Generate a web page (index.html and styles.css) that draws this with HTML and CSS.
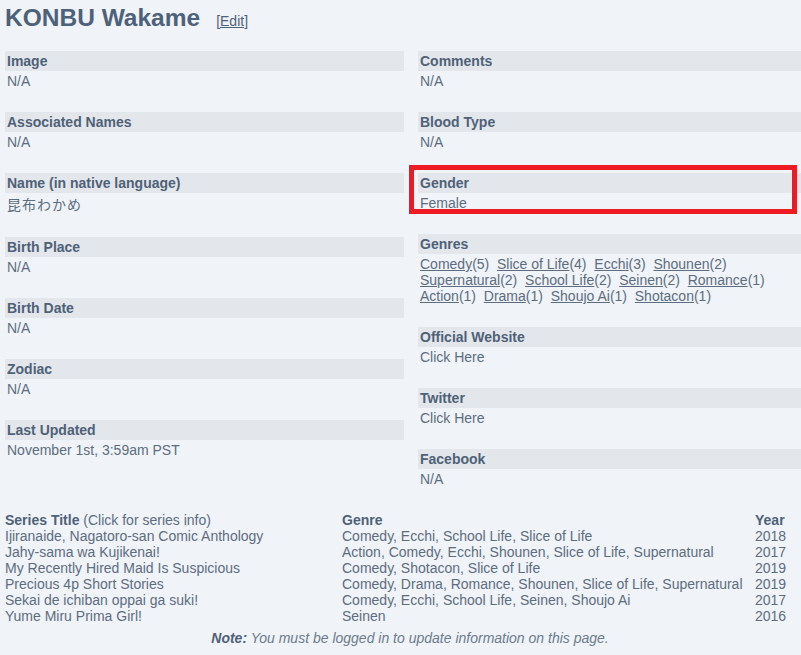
FILE: index.html
```html
<!DOCTYPE html>
<html>
<head>
<meta charset="utf-8">
<link rel="stylesheet" href="styles.css">
</head>
<body>
<div class="page">
  <div class="titlebar">
    <h1 class="title">KONBU Wakame</h1>
    <a class="edit" href="#">[Edit]</a>
  </div>
  <div class="cols">
    <div class="col">
      <div class="item"><div class="head">Image</div><div class="val">N/A</div></div>
      <div class="item"><div class="head">Associated Names</div><div class="val">N/A</div></div>
      <div class="item"><div class="head">Name (in native language)</div><div class="val cjk">昆布わかめ</div></div>
      <div class="item"><div class="head">Birth Place</div><div class="val">N/A</div></div>
      <div class="item"><div class="head">Birth Date</div><div class="val">N/A</div></div>
      <div class="item"><div class="head">Zodiac</div><div class="val">N/A</div></div>
      <div class="item"><div class="head">Last Updated</div><div class="val">November 1st, 3:59am PST</div></div>
    </div>
    <div class="col">
      <div class="item"><div class="head">Comments</div><div class="val">N/A</div></div>
      <div class="item"><div class="head">Blood Type</div><div class="val">N/A</div></div>
      <div class="item hl"><div class="head">Gender</div><div class="val">Female</div><div class="mark"></div></div>
      <div class="item"><div class="head">Genres</div><div class="val"><a href="#">Comedy</a>(5)&nbsp; <a href="#">Slice of Life</a>(4)&nbsp; <a href="#">Ecchi</a>(3)&nbsp; <a href="#">Shounen</a>(2)&nbsp; <a href="#">Supernatural</a>(2)&nbsp; <a href="#">School Life</a>(2)&nbsp; <a href="#">Seinen</a>(2)&nbsp; <a href="#">Romance</a>(1)&nbsp; <a href="#">Action</a>(1)&nbsp; <a href="#">Drama</a>(1)&nbsp; <a href="#">Shoujo Ai</a>(1)&nbsp; <a href="#">Shotacon</a>(1)</div></div>
      <div class="item"><div class="head">Official Website</div><div class="val">Click Here</div></div>
      <div class="item"><div class="head">Twitter</div><div class="val">Click Here</div></div>
      <div class="item"><div class="head">Facebook</div><div class="val">N/A</div></div>
    </div>
  </div>
  <div class="series">
    <div class="th"><b>Series Title</b> (Click for series info)</div><div class="th"><b>Genre</b></div><div class="th"><b>Year</b></div>
    <div>Ijiranaide, Nagatoro-san Comic Anthology</div><div>Comedy, Ecchi, School Life, Slice of Life</div><div>2018</div>
    <div>Jahy-sama wa Kujikenai!</div><div>Action, Comedy, Ecchi, Shounen, Slice of Life, Supernatural</div><div>2017</div>
    <div>My Recently Hired Maid Is Suspicious</div><div>Comedy, Shotacon, Slice of Life</div><div>2019</div>
    <div>Precious 4p Short Stories</div><div>Comedy, Drama, Romance, Shounen, Slice of Life, Supernatural</div><div>2019</div>
    <div>Sekai de ichiban oppai ga suki!</div><div>Comedy, Ecchi, School Life, Seinen, Shoujo Ai</div><div>2017</div>
    <div>Yume Miru Prima Girl!</div><div>Seinen</div><div>2016</div>
  </div>
  <div class="note"><b>Note:</b> You must be logged in to update information on this page.</div>
</div>
</body>
</html>
```

FILE: styles.css
```css
html, body {
  margin: 0;
  padding: 0;
  overflow: hidden;
  background: #f0f3f8;
}
body {
  font-family: "Liberation Sans", Arial, sans-serif;
  font-size: 14px;
  color: #5d6d80;
}
.page {
  width: 810px;
  margin-left: 5px;
  padding-top: 4px;
}
.titlebar {
  display: flex;
  align-items: baseline;
  gap: 16px;
  height: 28px;
}
.title {
  margin: 0;
  font-size: 24.5px;
  line-height: 28px;
  font-weight: bold;
  color: #4d6179;
}
.edit {
  color: #4f6178;
  font-size: 14px;
}
.cols {
  display: grid;
  grid-template-columns: 399px 1fr;
  column-gap: 14px;
  margin-top: 19px;
}
.item {
  position: relative;
  margin-bottom: 23px;
}
.head {
  background: #e3e7ec;
  height: 20px;
  line-height: 20px;
  padding-left: 2px;
  font-weight: bold;
  color: #4f6177;
}
.val {
  padding-left: 2px;
  padding-top: 2px;
  line-height: 16px;
}
.val.cjk {
  font-family: "Liberation Sans", "Noto Sans CJK JP", sans-serif;
  line-height: 18px;
  padding-top: 3px;
  letter-spacing: 1px;
}
.val a {
  color: #5d6d80;
  text-decoration: underline;
}
.mark {
  position: absolute;
  top: -8px;
  left: -9px;
  width: 378px;
  height: 39px;
  border: 5px solid #ed1c24;
}
.series {
  display: grid;
  grid-template-columns: 337px 413px 1fr;
  line-height: 16px;
  margin-top: 2px;
}
.series b {
  color: #4f6177;
}
.note {
  width: 810px;
  text-align: center;
  font-style: italic;
  line-height: 16px;
  margin-top: 6px;
  color: #6b7b8c;
}
.note b {
  color: #4f6177;
}
```
